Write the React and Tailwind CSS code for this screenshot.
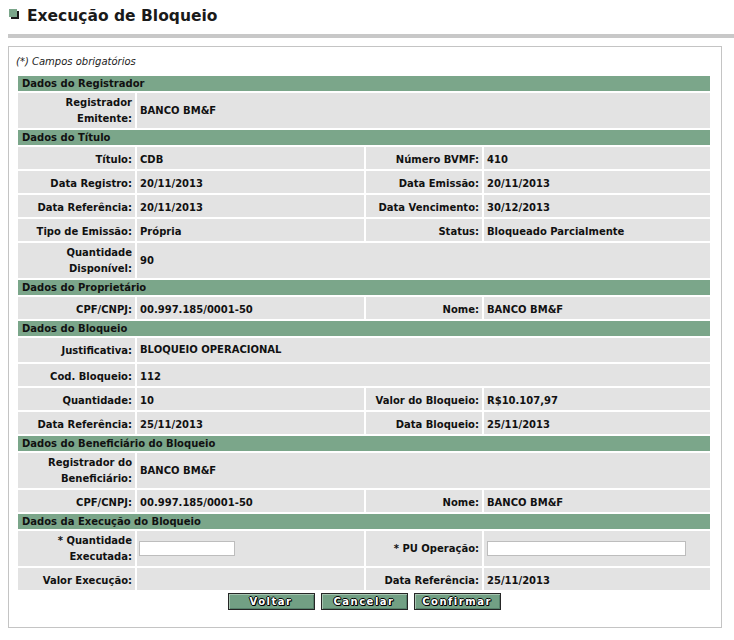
import React from "react";

function H({ children }) {
  return (
    <div className="col-span-4 h-[15px] bg-[#7ba68a] pl-[4px] flex items-center text-[10px] font-bold text-[#111] leading-none">
      {children}
    </div>
  );
}

function L({ children, size = "r" }) {
  const h =
    size === "R"
      ? "h-[35px] leading-[16px] items-center"
      : size === "j"
      ? "h-[24px] leading-[12px] items-start pt-[7px]"
      : "h-[22px] leading-[12px] items-start pt-[7px]";
  return (
    <div className={`${h} bg-[#e3e3e3] flex justify-end text-right pr-[3px] font-bold text-[#111]`}>
      <div>{children}</div>
    </div>
  );
}

function V({ children, span = false, size = "r" }) {
  const h =
    size === "R"
      ? "h-[35px] items-center"
      : size === "j"
      ? "h-[24px] items-start pt-[6px]"
      : "h-[22px] items-start pt-[7px]";
  return (
    <div
      className={`${h} ${span ? "col-span-3" : ""} bg-[#e3e3e3] flex pl-[3px] font-bold text-[#111] leading-[12px]`}
    >
      {children}
    </div>
  );
}

function Btn({ children }) {
  return (
    <button className="w-[87px] h-[17px] bg-[#72a084] border border-[#262626] shadow-[inset_1px_1px_0_#a6c4b0,inset_-1px_-1px_0_#56806a] text-white text-[10px] font-bold tracking-[1.5px] leading-none flex items-center justify-center [text-shadow:1px_1px_0_#000,-1px_0_0_#000,0_-1px_0_#000,1px_0_0_#000,0_1px_0_#000]">
      {children}
    </button>
  );
}

export default function App() {
  return (
    <div className="w-[734px] h-[640px] bg-white font-['DejaVu_Sans',Verdana,sans-serif] text-[10px] text-[#111]">
      <div className="pt-[7px] pl-[9px] flex items-start h-[25px]">
        <span className="w-[8px] h-[8px] bg-[#7ba68a] shadow-[2px_2px_0_#1a1a1a] mt-[2px]" />
        <span className="ml-[10px] text-[15.5px] leading-[18px] font-bold text-[#1a1a1a]">
          Execução de Bloqueio
        </span>
      </div>
      <div className="mt-[9px] ml-[8px] h-[4px] bg-[#c8c8c8]" />
      <div className="mt-[8px] ml-[8px] w-[714px] h-[582px] border border-[#c4c4c4] pl-[9px] pt-[8px]">
        <div className="italic text-[10px] leading-[12px] text-[#222] -ml-[2px] pt-[1px]">
          (*) Campos obrigatórios
        </div>
        <div className="mt-[8px] w-[692px] grid grid-cols-[117px_227px_116px_226px] gap-[2px]">
          <H>Dados do Registrador</H>
          <L size="R">
            Registrador
            <br />
            Emitente:
          </L>
          <V span size="R">BANCO BM&amp;F</V>

          <H>Dados do Título</H>
          <L>Título:</L>
          <V>CDB</V>
          <L>Número BVMF:</L>
          <V>410</V>
          <L>Data Registro:</L>
          <V>20/11/2013</V>
          <L>Data Emissão:</L>
          <V>20/11/2013</V>
          <L>Data Referência:</L>
          <V>20/11/2013</V>
          <L>Data Vencimento:</L>
          <V>30/12/2013</V>
          <L>Tipo de Emissão:</L>
          <V>Própria</V>
          <L>Status:</L>
          <V>Bloqueado Parcialmente</V>
          <L size="R">
            Quantidade
            <br />
            Disponível:
          </L>
          <V span size="R">90</V>

          <H>Dados do Proprietário</H>
          <L>CPF/CNPJ:</L>
          <V>00.997.185/0001-50</V>
          <L>Nome:</L>
          <V>BANCO BM&amp;F</V>

          <H>Dados do Bloqueio</H>
          <L size="j">Justificativa:</L>
          <V span size="j">BLOQUEIO OPERACIONAL</V>
          <L>Cod. Bloqueio:</L>
          <V span>112</V>
          <L>Quantidade:</L>
          <V>10</V>
          <L>Valor do Bloqueio:</L>
          <V>R$10.107,97</V>
          <L>Data Referência:</L>
          <V>25/11/2013</V>
          <L>Data Bloqueio:</L>
          <V>25/11/2013</V>

          <H>Dados do Beneficiário do Bloqueio</H>
          <L size="R">
            Registrador do
            <br />
            Beneficiário:
          </L>
          <V span size="R">BANCO BM&amp;F</V>
          <L>CPF/CNPJ:</L>
          <V>00.997.185/0001-50</V>
          <L>Nome:</L>
          <V>BANCO BM&amp;F</V>

          <H>Dados da Execução do Bloqueio</H>
          <L size="R">
            * Quantidade
            <br />
            Executada:
          </L>
          <V size="R">
            <input
              type="text"
              className="-ml-[1px] w-[96px] h-[15px] bg-white border border-[#bdbdbd] outline-none"
            />
          </V>
          <L size="R">* PU Operação:</L>
          <V size="R">
            <input
              type="text"
              className="w-[199px] h-[15px] bg-white border border-[#bdbdbd] outline-none"
            />
          </V>
          <L>Valor Execução:</L>
          <V></V>
          <L>Data Referência:</L>
          <V>25/11/2013</V>
        </div>
        <div className="w-[692px] mt-[3px] flex justify-center gap-[6px]">
          <Btn>Voltar</Btn>
          <Btn>Cancelar</Btn>
          <Btn>Confirmar</Btn>
        </div>
      </div>
    </div>
  );
}
